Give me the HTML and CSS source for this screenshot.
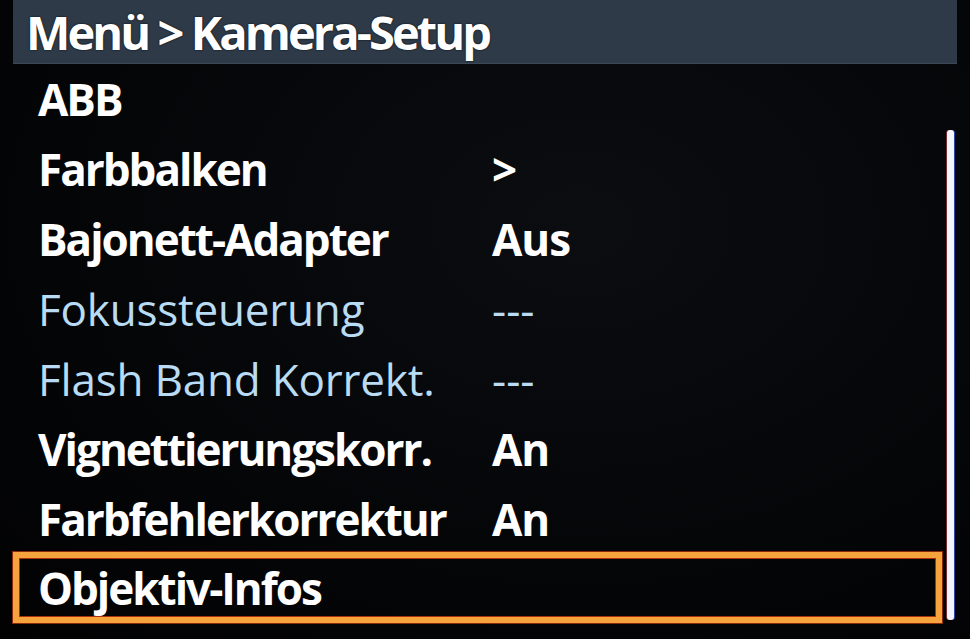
FILE: index.html
```html
<!DOCTYPE html>
<html lang="de">
<head>
  <meta charset="UTF-8">
  <title>Menü > Kamera-Setup</title>
  <link rel="stylesheet" href="styles.css">
</head>
<body>
  <div class="screen">
    <header class="titel">Menü &gt; Kamera-Setup</header>
    <div class="inhalt">
      <ul class="menue">
        <li class="zeile"><span class="name">ABB</span></li>
        <li class="zeile"><span class="name">Farbbalken</span><span class="wert">&gt;</span></li>
        <li class="zeile"><span class="name">Bajonett-Adapter</span><span class="wert">Aus</span></li>
        <li class="zeile inaktiv"><span class="name">Fokussteuerung</span><span class="wert">---</span></li>
        <li class="zeile inaktiv"><span class="name">Flash Band Korrekt.</span><span class="wert">---</span></li>
        <li class="zeile"><span class="name">Vignettierungskorr.</span><span class="wert">An</span></li>
        <li class="zeile"><span class="name">Farbfehlerkorrektur</span><span class="wert">An</span></li>
        <li class="zeile aktiv"><span class="name">Objektiv-Infos</span></li>
      </ul>
      <div class="scrollbalken"></div>
    </div>
  </div>
</body>
</html>
```
FILE: styles.css
```css
/* Kamera-Menü */
body {
  margin: 0;
  background-color: #000;
  color: #fff;
  font-family: 'Open Sans', 'DejaVu Sans', sans-serif;
}

.screen {
  width: 970px;
  height: 639px;
  padding-left: 13px;
  box-sizing: border-box;
  overflow: hidden;
  background: radial-gradient(ellipse at 60% 35%, #0b0d11 0%, #050608 55%, #020203 100%);
}

.titel {
  width: 944px;
  height: 64px;
  box-sizing: border-box;
  padding-left: 13px;
  background-color: #2e3a48;
  border-bottom: 1px solid #3c4856;
  font-size: 47px;
  font-weight: 700;
  line-height: 64px;
  letter-spacing: -2.9px;
  white-space: nowrap;
  text-shadow: 0 0 2px #000;
}

.inhalt {
  display: flex;
  gap: 5px;
}

.menue {
  list-style: none;
  margin: 0;
  padding: 0;
  width: 929px;
}

.zeile {
  display: flex;
  height: 70px;
  box-sizing: border-box;
  padding-left: 25px;
  font-size: 44px;
  font-weight: 700;
  line-height: 70px;
  letter-spacing: -2px;
  white-space: nowrap;
}

.name {
  width: 454px;
}

.wert {
  letter-spacing: -1px;
}

.inaktiv .name {
  color: #b9dbf3;
  font-weight: 400;
  letter-spacing: -0.2px;
}

.inaktiv .wert {
  color: #b9dbf3;
  font-weight: 400;
  letter-spacing: 0;
}

.aktiv {
  margin-top: -2px;
  height: 71px;
  padding-left: 19px;
  line-height: 61px;
  border: 6px solid #f5a33c;
  box-shadow: 0 0 0 1px #8a2a0c, inset 0 0 0 1px #a8320e;
}

.scrollbalken {
  width: 7px;
  height: 490px;
  margin-top: 66px;
  border-radius: 3px;
  background-color: #f4f6fb;
  box-shadow: 1px 0 0 #2a48a8, -1px 0 0 #7a2a30;
}
```
